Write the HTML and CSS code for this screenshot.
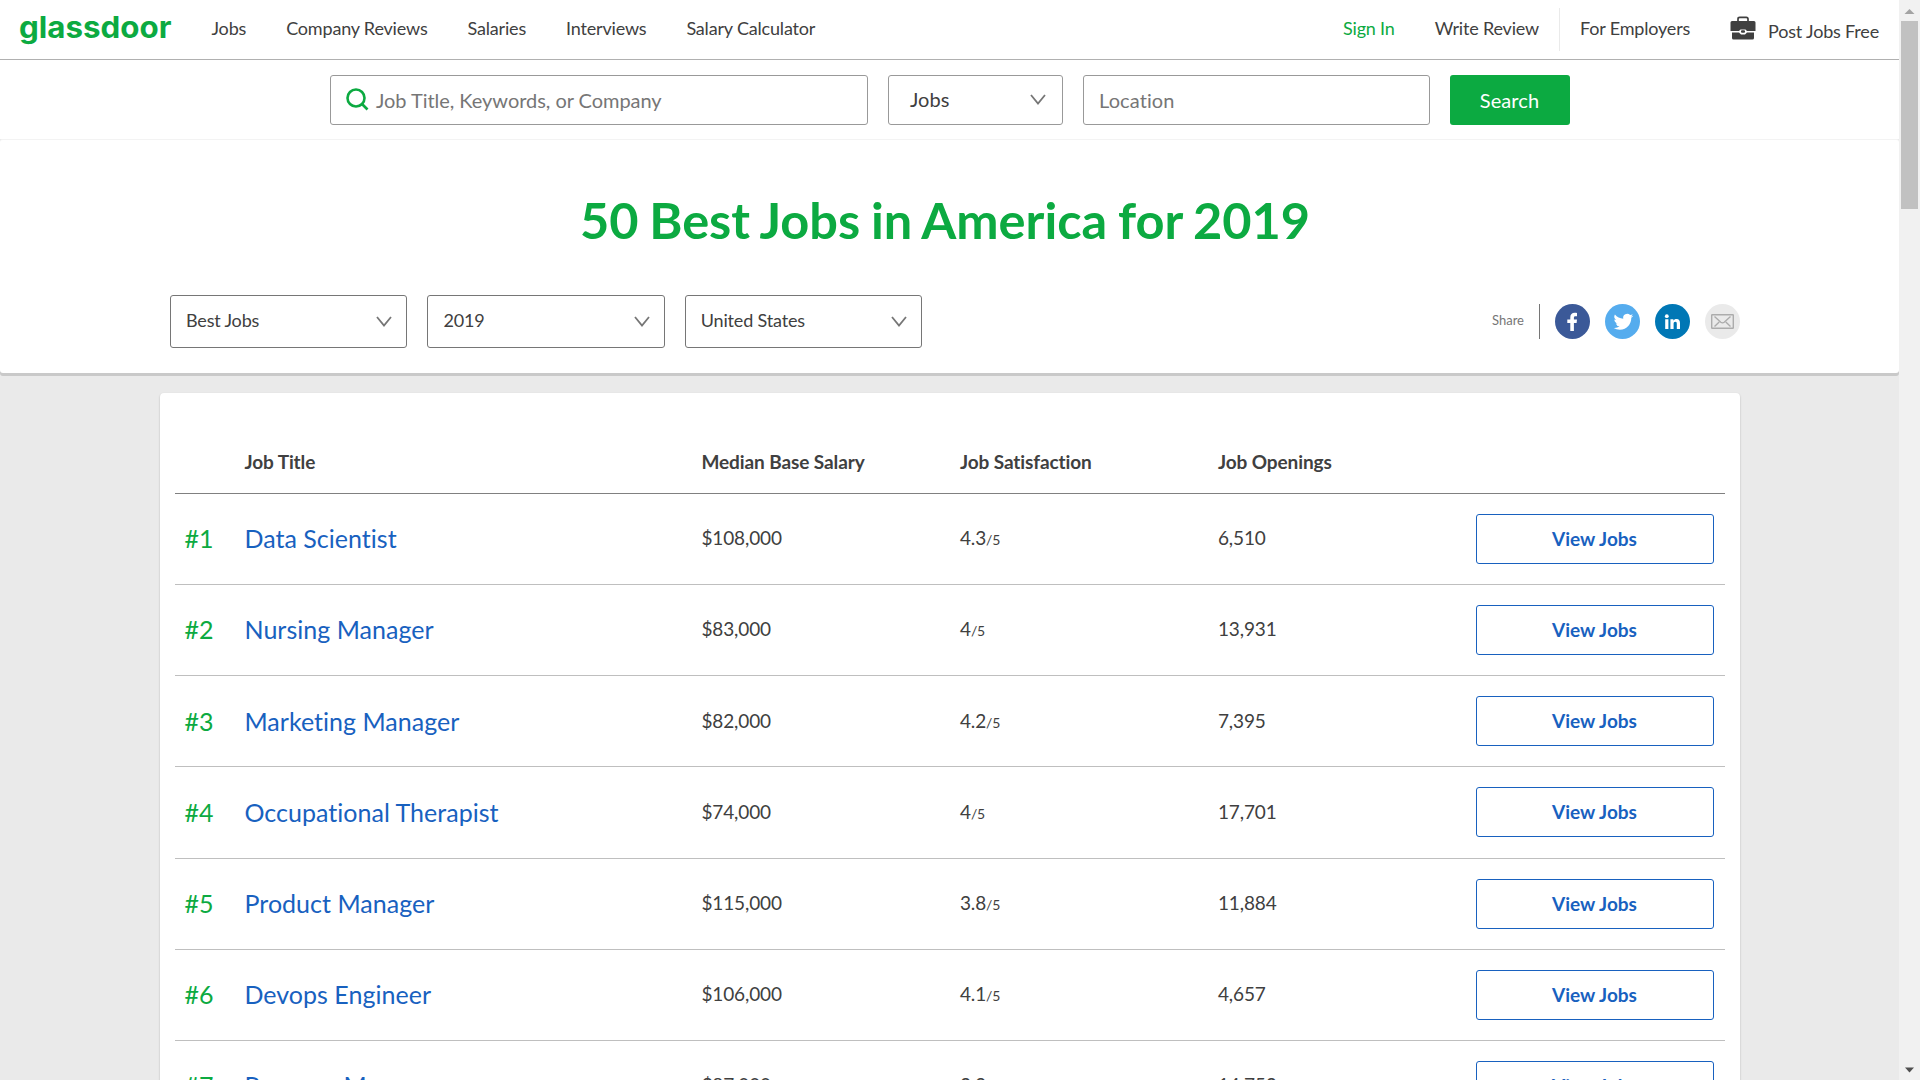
FILE: index.html
```html
<!DOCTYPE html>
<html lang="en">
<head>
<meta charset="utf-8">
<title>50 Best Jobs in America for 2019</title>
<link rel="stylesheet" href="styles.css">
</head>
<body>
<div class="page">
<header class="topnav">
  <svg class="logo" width="153" height="59" viewBox="0 0 153 59"><text x="0" y="37.5" textLength="152.500" lengthAdjust="spacingAndGlyphs">glassdoor</text></svg>
  <nav class="links"><a>Jobs</a><a>Company Reviews</a><a>Salaries</a><a>Interviews</a><a>Salary Calculator</a></nav>
  <nav class="account"><a class="signin">Sign In</a><a>Write Review</a><a class="employers">For Employers</a>
    <a class="post"><svg width="26" height="24" viewBox="0 0 26 24"><path d="M8 5V3q0-1.7 1.7-1.7h6.600q1.700 0 1.700 1.700v2" fill="none" stroke="#404040" stroke-width="1.700"/><path d="M2 5h22q1.500 0 1.500 1.500V15h-8.500l-1.500-1.600h-5L9 15H.5V6.500Q.5 5 2 5z" fill="#404040"/><path d="M2 16.600h7l2 2h4l2-2h7V22q0 1.500-1.500 1.500h-19Q2 23.500 2 22z" fill="#404040"/><rect x="11" y="14.200" width="4" height="2.500" rx="1" fill="#404040"/></svg><span>Post Jobs Free</span></a>
  </nav>
</header>
<div class="searchbar">
  <div class="field keyword"><svg width="23" height="23" viewBox="0 0 23 23" fill="none" stroke="#0caa41" stroke-width="2.600"><circle cx="10" cy="10" r="8.500"/><path d="M16 16l5.500 5.500"/></svg><span>Job Title, Keywords, or Company</span></div>
  <div class="field kind"><span>Jobs</span><svg class="chev" width="16" height="11" viewBox="0 0 16 11"><path d="M1 1l7 8.500L15 1"/></svg></div>
  <div class="field location"><span>Location</span></div>
  <div class="go">Search</div>
</div>
<section class="hero">
  <h1>50 Best Jobs in America for 2019</h1>
  <div class="filters">
    <div class="select"><span>Best Jobs</span><svg class="chev" width="16" height="11" viewBox="0 0 16 11"><path d="M1 1l7 8.500L15 1"/></svg></div>
    <div class="select"><span>2019</span><svg class="chev" width="16" height="11" viewBox="0 0 16 11"><path d="M1 1l7 8.500L15 1"/></svg></div>
    <div class="select"><span>United States</span><svg class="chev" width="16" height="11" viewBox="0 0 16 11"><path d="M1 1l7 8.500L15 1"/></svg></div>
    <div class="share"><span>Share</span><i></i>
      <svg width="35" height="35" viewBox="0 0 35 35"><circle cx="17.500" cy="17.500" r="17.500" fill="#3b5998"/><path d="M15.300 27V19h-3v-3.600h3v-2.200c0-2.900 1.700-4.500 4.400-4.500.9 0 1.800.1 2.300.2v3.300h-1.500c-1.300 0-1.600.7-1.600 1.600v1.600h3.100l-.4 3.600h-2.700v8z" fill="#fff"/></svg>
      <svg width="35" height="35" viewBox="0 0 35 35"><circle cx="17.500" cy="17.500" r="17.500" fill="#55acee"/><path transform="translate(8.600 8) scale(.82)" d="M23.950 4.570a10 10 0 01-2.820.77 4.960 4.960 0 002.160-2.720c-.95.550-2 .95-3.120 1.180a4.920 4.920 0 00-8.380 4.480C7.690 8.100 4.070 6.130 1.640 3.160a4.920 4.920 0 001.520 6.570 4.900 4.900 0 01-2.230-.61v.06c0 2.380 1.700 4.370 3.950 4.820a5 5 0 01-2.210.09 4.940 4.940 0 004.600 3.420A9.870 9.870 0 010 19.540a13.940 13.940 0 007.550 2.210c9.050 0 14-7.500 14-13.980l-.02-.64a9.940 9.940 0 002.420-2.560z" fill="#fff"/></svg>
      <svg width="35" height="35" viewBox="0 0 35 35"><circle cx="17.500" cy="17.500" r="17.500" fill="#0077b5"/><path d="M10.200 15.300h3.200V25h-3.200zM15.400 15.300h3v1.400c.6-1 1.700-1.700 3.100-1.700 2.700 0 3.500 1.700 3.500 4.300V25h-3.200v-5.100c0-1.400-.3-2.200-1.400-2.200-1.300 0-1.800.9-1.800 2.200V25h-3.200z" fill="#fff"/><circle cx="11.800" cy="12.200" r="1.900" fill="#fff"/></svg>
      <svg width="35" height="35" viewBox="0 0 35 35"><circle cx="17.500" cy="17.500" r="17.500" fill="#eaeaea"/><g fill="none" stroke="#acacac" stroke-width="1.400"><rect x="6.700" y="10.700" width="21.600" height="13.600" rx=".5"/><path d="M9.500 12.500l6.300 5.700q1.700 1.300 3.400 0l6.300-5.700M9.500 22.500l4.700-4.500M25.500 22.500l-4.700-4.500"/></g></svg>
    </div>
  </div>
</section>
<main class="card">
  <div class="row head"><span></span><span>Job Title</span><span>Median Base Salary</span><span>Job Satisfaction</span><span>Job Openings</span></div>
  <div class="row"><b>#1</b><a>Data Scientist</a><span>$108,000</span><span>4.3<small>/5</small></span><span>6,510</span><div class="view">View Jobs</div></div>
  <div class="row"><b>#2</b><a>Nursing Manager</a><span>$83,000</span><span>4<small>/5</small></span><span>13,931</span><div class="view">View Jobs</div></div>
  <div class="row"><b>#3</b><a>Marketing Manager</a><span>$82,000</span><span>4.2<small>/5</small></span><span>7,395</span><div class="view">View Jobs</div></div>
  <div class="row"><b>#4</b><a>Occupational Therapist</a><span>$74,000</span><span>4<small>/5</small></span><span>17,701</span><div class="view">View Jobs</div></div>
  <div class="row"><b>#5</b><a>Product Manager</a><span>$115,000</span><span>3.8<small>/5</small></span><span>11,884</span><div class="view">View Jobs</div></div>
  <div class="row"><b>#6</b><a>Devops Engineer</a><span>$106,000</span><span>4.1<small>/5</small></span><span>4,657</span><div class="view">View Jobs</div></div>
  <div class="row"><b>#7</b><a>Program Manager</a><span>$87,000</span><span>3.9<small>/5</small></span><span>14,753</span><div class="view">View Jobs</div></div>
</main>
</div>
<aside class="scrollbar"><svg width="21" height="21" viewBox="0 0 21 21"><path d="M5.500 14l5-5 5 5z" fill="#a3a3a3"/></svg><div class="thumb"></div><svg width="21" height="21" viewBox="0 0 21 21"><path d="M6 8.500h9l-4.500 5z" fill="#505050"/></svg></aside>
</body>
</html>
```
FILE: styles.css
```css
* { box-sizing: border-box; }
body { margin: 0; height: 1080px; overflow: hidden; display: flex; background: #eaeaea; color: #404040; font-family: Lato, "Liberation Sans", sans-serif; font-variant-ligatures: none; }
svg { display: block; flex: none; }
.page { width: 1899px; height: 1080px; overflow: hidden; }
.topnav { display: flex; height: 60px; background: #fff; border-bottom: 1px solid #b0b0b0; padding: 0 20px 0 19px; font-size: 18px; letter-spacing: -.18px; white-space: nowrap; }
.logo text { font: 700 30px Inter, sans-serif; letter-spacing: 0; fill: #0caa41; }
.links { display: flex; gap: 40px; margin-left: 39.500px; line-height: 57px; }
.account { display: flex; margin-left: auto; line-height: 57px; }
.account a { margin-left: 40px; }
.account .signin { color: #0caa41; }
.account .employers { margin: 8px 0 8px 20px; padding-left: 20px; border-left: 1px solid #eaeaea; line-height: 41px; }
.post { display: flex; gap: 12px; line-height: 62px; }
.post svg { margin-top: 15.500px; }
.searchbar { display: flex; gap: 20px; height: 79px; padding: 15px 0 0 330px; background: #fff; }
.field { display: flex; align-items: center; height: 50px; border: 1px solid #999; border-radius: 3px; font-size: 20px; color: #767676; }
.keyword { width: 538px; padding-left: 15px; gap: 7px; letter-spacing: -.04px; }
.keyword svg { margin-top: -1px; }
.kind { width: 175px; color: #404040; padding: 0 16px 0 21px; justify-content: space-between; }
.kind span { margin-top: -3px; }
.kind svg { margin-top: -1px; }
.location { width: 347px; padding-left: 15px; letter-spacing: .1px; }
.go { width: 120px; height: 50px; border-radius: 3px; background: #0caa41; color: #fff; text-align: center; font-size: 20px; letter-spacing: .1px; line-height: 50px; padding-right: 1px; }
.chev { fill: none; stroke: #767676; stroke-width: 1.8; }
.hero { height: 234px; background: #fff; border-top: 1px solid #f3f3f3; border-radius: 3px; box-shadow: 0 3px 0 #c9c9c9; padding: 0 159px 0 170px; }
h1 { margin: 0; padding-top: 49px; height: 155px; font-size: 50.500px; line-height: 62px; font-weight: 700; color: #0caa41; text-align: center; padding-right: 20px; word-spacing: -1.500px; }
.filters { display: flex; gap: 20px; }
.select { display: flex; justify-content: space-between; align-items: center; width: 237.400px; height: 53px; border: 1px solid #767676; border-radius: 3px; padding: 0 14px 0 15px; font-size: 18px; letter-spacing: -.17px; }
.select span { margin-top: -3px; }
.share { display: flex; align-items: center; gap: 15px; margin-left: auto; font-size: 13px; color: #767676; }
.share span { margin-top: -3px; }
.share i { flex: none; width: 1px; height: 35px; background: #767676; }
.card { width: 1580px; height: 720px; margin: 20px 0 0 160px; padding: 31px 15px 0; background: #fff; border-radius: 4px; box-shadow: 0 1px 2px rgba(0,0,0,.25); }
.row { display: grid; grid-template-columns: 60px 457px 258.500px 258px 257.500px 238px; align-items: center; height: 91.140px; padding-left: 9.500px; border-bottom: 1px solid #bfbfbf; font-size: 19px; letter-spacing: -.15px; }
.head { height: 70px; border-color: #808080; font-weight: 700; letter-spacing: -.1px; }
.row b { font-weight: 400; font-size: 25px; color: #0caa41; letter-spacing: 0; padding-bottom: 1.500px; }
.row a { font-size: 25px; color: #1861bf; letter-spacing: .02px; padding-bottom: 1.500px; }
.row span { padding-bottom: 2.500px; }
.row.head span { padding: 5px 0 0; }
.row small { font-size: 14px; }
.view { height: 50px; border: 1px solid #1861bf; border-radius: 3px; color: #1861bf; text-align: center; font-weight: 700; font-size: 19px; letter-spacing: 0; line-height: 47.500px; }
.scrollbar { width: 21px; height: 1080px; background: #f1f1f1; display: flex; flex-direction: column; }
.thumb { width: 17px; height: 188px; margin: 0 2px auto; background: #c1c1c1; }
```
